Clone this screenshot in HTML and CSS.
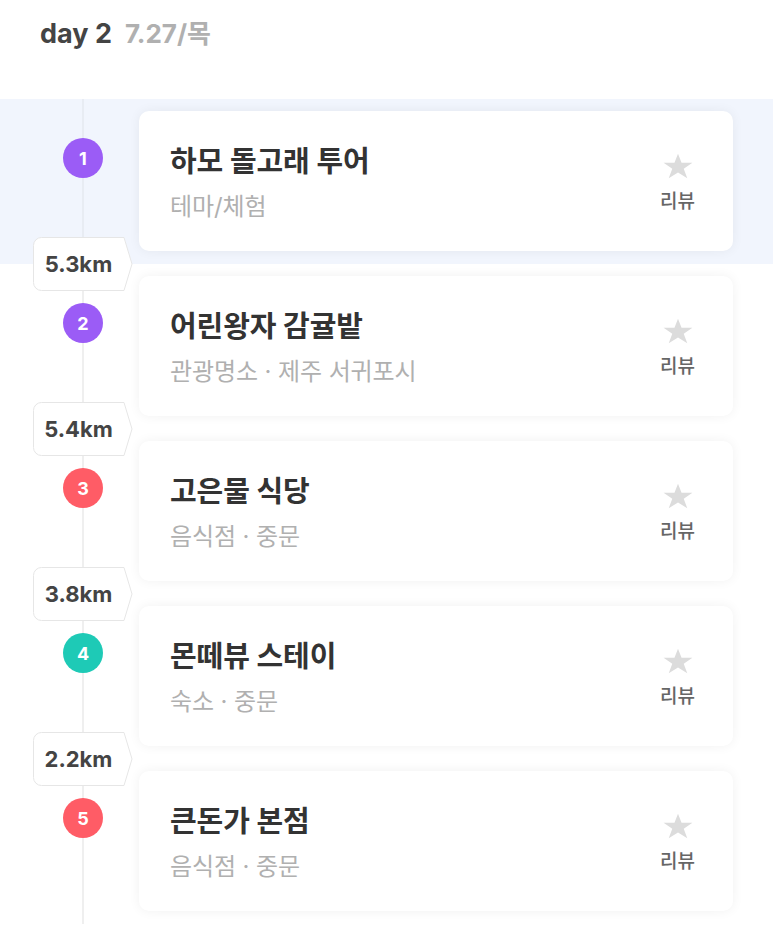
FILE: index.html
```html
<!DOCTYPE html>
<html lang="ko">
  <head>
    <meta charset="utf-8" />
    <meta name="viewport" content="width=device-width, initial-scale=1" />
    <title>day 2</title>
    <link rel="stylesheet" href="styles.css">
  </head>
  <body>
    <div class="day-head">
      <span class="day-no">day 2</span>
      <span class="day-date">7.27/목</span>
    </div>

    <div class="plan-list">

      <div class="plan-item active">
        <div class="rail"><span class="num purple">1</span></div>
        <div class="card">
          <div class="info">
            <div class="title">하모 돌고래 투어</div>
            <div class="sub">테마/체험</div>
          </div>
          <div class="review">
            <svg class="star" viewBox="0 0 30 26"><polygon points="15,0.8 18.54,9.81 29.4,9.81 20.73,15.86 24.27,25.2 15,19.61 5.73,25.2 9.27,15.86 0.6,9.81 11.46,9.81"/></svg>
            <span>리뷰</span>
          </div>
        </div>
        <div class="dist">
          <svg viewBox="0 0 100 54"><path d="M8.5 .5H91L99 27L91 53.5H8.5A8 8 0 0 1 .5 45.5V8.5A8 8 0 0 1 8.5 .5Z"/></svg>
          <span>5.3km</span>
        </div>
      </div>

      <div class="plan-item">
        <div class="rail"><span class="num purple">2</span></div>
        <div class="card">
          <div class="info">
            <div class="title">어린왕자 감귤밭</div>
            <div class="sub">관광명소 · 제주 서귀포시</div>
          </div>
          <div class="review">
            <svg class="star" viewBox="0 0 30 26"><polygon points="15,0.8 18.54,9.81 29.4,9.81 20.73,15.86 24.27,25.2 15,19.61 5.73,25.2 9.27,15.86 0.6,9.81 11.46,9.81"/></svg>
            <span>리뷰</span>
          </div>
        </div>
        <div class="dist">
          <svg viewBox="0 0 100 54"><path d="M8.5 .5H91L99 27L91 53.5H8.5A8 8 0 0 1 .5 45.5V8.5A8 8 0 0 1 8.5 .5Z"/></svg>
          <span>5.4km</span>
        </div>
      </div>

      <div class="plan-item">
        <div class="rail"><span class="num red">3</span></div>
        <div class="card">
          <div class="info">
            <div class="title">고은물 식당</div>
            <div class="sub">음식점 · 중문</div>
          </div>
          <div class="review">
            <svg class="star" viewBox="0 0 30 26"><polygon points="15,0.8 18.54,9.81 29.4,9.81 20.73,15.86 24.27,25.2 15,19.61 5.73,25.2 9.27,15.86 0.6,9.81 11.46,9.81"/></svg>
            <span>리뷰</span>
          </div>
        </div>
        <div class="dist">
          <svg viewBox="0 0 100 54"><path d="M8.5 .5H91L99 27L91 53.5H8.5A8 8 0 0 1 .5 45.5V8.5A8 8 0 0 1 8.5 .5Z"/></svg>
          <span>3.8km</span>
        </div>
      </div>

      <div class="plan-item">
        <div class="rail"><span class="num teal">4</span></div>
        <div class="card">
          <div class="info">
            <div class="title">몬떼뷰 스테이</div>
            <div class="sub">숙소 · 중문</div>
          </div>
          <div class="review">
            <svg class="star" viewBox="0 0 30 26"><polygon points="15,0.8 18.54,9.81 29.4,9.81 20.73,15.86 24.27,25.2 15,19.61 5.73,25.2 9.27,15.86 0.6,9.81 11.46,9.81"/></svg>
            <span>리뷰</span>
          </div>
        </div>
        <div class="dist">
          <svg viewBox="0 0 100 54"><path d="M8.5 .5H91L99 27L91 53.5H8.5A8 8 0 0 1 .5 45.5V8.5A8 8 0 0 1 8.5 .5Z"/></svg>
          <span>2.2km</span>
        </div>
      </div>

      <div class="plan-item">
        <div class="rail"><span class="num red">5</span></div>
        <div class="card">
          <div class="info">
            <div class="title">큰돈가 본점</div>
            <div class="sub">음식점 · 중문</div>
          </div>
          <div class="review">
            <svg class="star" viewBox="0 0 30 26"><polygon points="15,0.8 18.54,9.81 29.4,9.81 20.73,15.86 24.27,25.2 15,19.61 5.73,25.2 9.27,15.86 0.6,9.81 11.46,9.81"/></svg>
            <span>리뷰</span>
          </div>
        </div>
      </div>

    </div>
  </body>
</html>
```

FILE: styles.css
```css
body {
     margin: 0;
     background: #fff;
     font-family: "Inter", "Noto Sans CJK KR", sans-serif;
     color: #333;
}

.day-head {
     height: 99px;
     box-sizing: border-box;
     padding: 16px 40px 0;
     display: flex;
     gap: 13px;
     font-size: 27px;
     font-weight: 700;
     line-height: 36px;
}

.day-no {
     color: #444;
}

.day-date {
     color: #b0b0b0;
     font-size: 26px;
}

.plan-item {
     position: relative;
     display: flex;
     padding: 12px 40px 13px 0;
     background: linear-gradient(90deg, transparent 82px, #efefef 82px, #efefef 84px, transparent 84px);
}

.plan-item.active {
     background: linear-gradient(90deg, transparent 82px, #e8ecf3 82px, #e8ecf3 84px, transparent 84px), #f1f5fd;
}

.rail {
     flex: none;
     width: 139px;
     box-sizing: border-box;
     padding: 27px 0 0 63px;
}

.num {
     display: flex;
     align-items: center;
     justify-content: center;
     width: 40px;
     height: 40px;
     border-radius: 50%;
     color: #fff;
     font-size: 18px;
     font-weight: 700;
}

.purple { background: #9b5cf6; }
.red { background: #ff5c66; }
.teal { background: #1ecab6; }

.card {
     flex: 1;
     height: 140px;
     box-sizing: border-box;
     display: flex;
     align-items: center;
     padding: 0 38px 0 31px;
     background: #fff;
     border-radius: 10px;
     box-shadow: 0 0 12px rgba(0, 0, 0, 0.06);
}

.info {
     flex: 1;
     padding-top: 4px;
}

.title {
     font-size: 29px;
     font-weight: 700;
     line-height: 36px;
     letter-spacing: -0.1px;
     color: #333;
}

.sub {
     margin-top: 12px;
     font-size: 24px;
     line-height: 30px;
     letter-spacing: -0.1px;
     color: #b0b0b0;
}

.review {
     display: flex;
     flex-direction: column;
     align-items: center;
     gap: 12px;
     padding-top: 3px;
     font-size: 19px;
     font-weight: 500;
     line-height: 22px;
     color: #666;
}

.star {
     width: 30px;
     height: 26px;
     fill: #dcdcdc;
}

.dist {
     position: absolute;
     left: 33px;
     bottom: -27px;
     z-index: 1;
     width: 100px;
     height: 54px;
     display: grid;
}

.dist svg,
.dist span {
     grid-area: 1 / 1;
}

.dist svg {
     width: 100px;
     height: 54px;
     fill: #fff;
     stroke: #e6e6e6;
     stroke-width: 1;
}

.dist span {
     width: 91px;
     display: flex;
     align-items: center;
     justify-content: center;
     font-size: 22px;
     font-weight: 700;
     color: #444;
}
```
